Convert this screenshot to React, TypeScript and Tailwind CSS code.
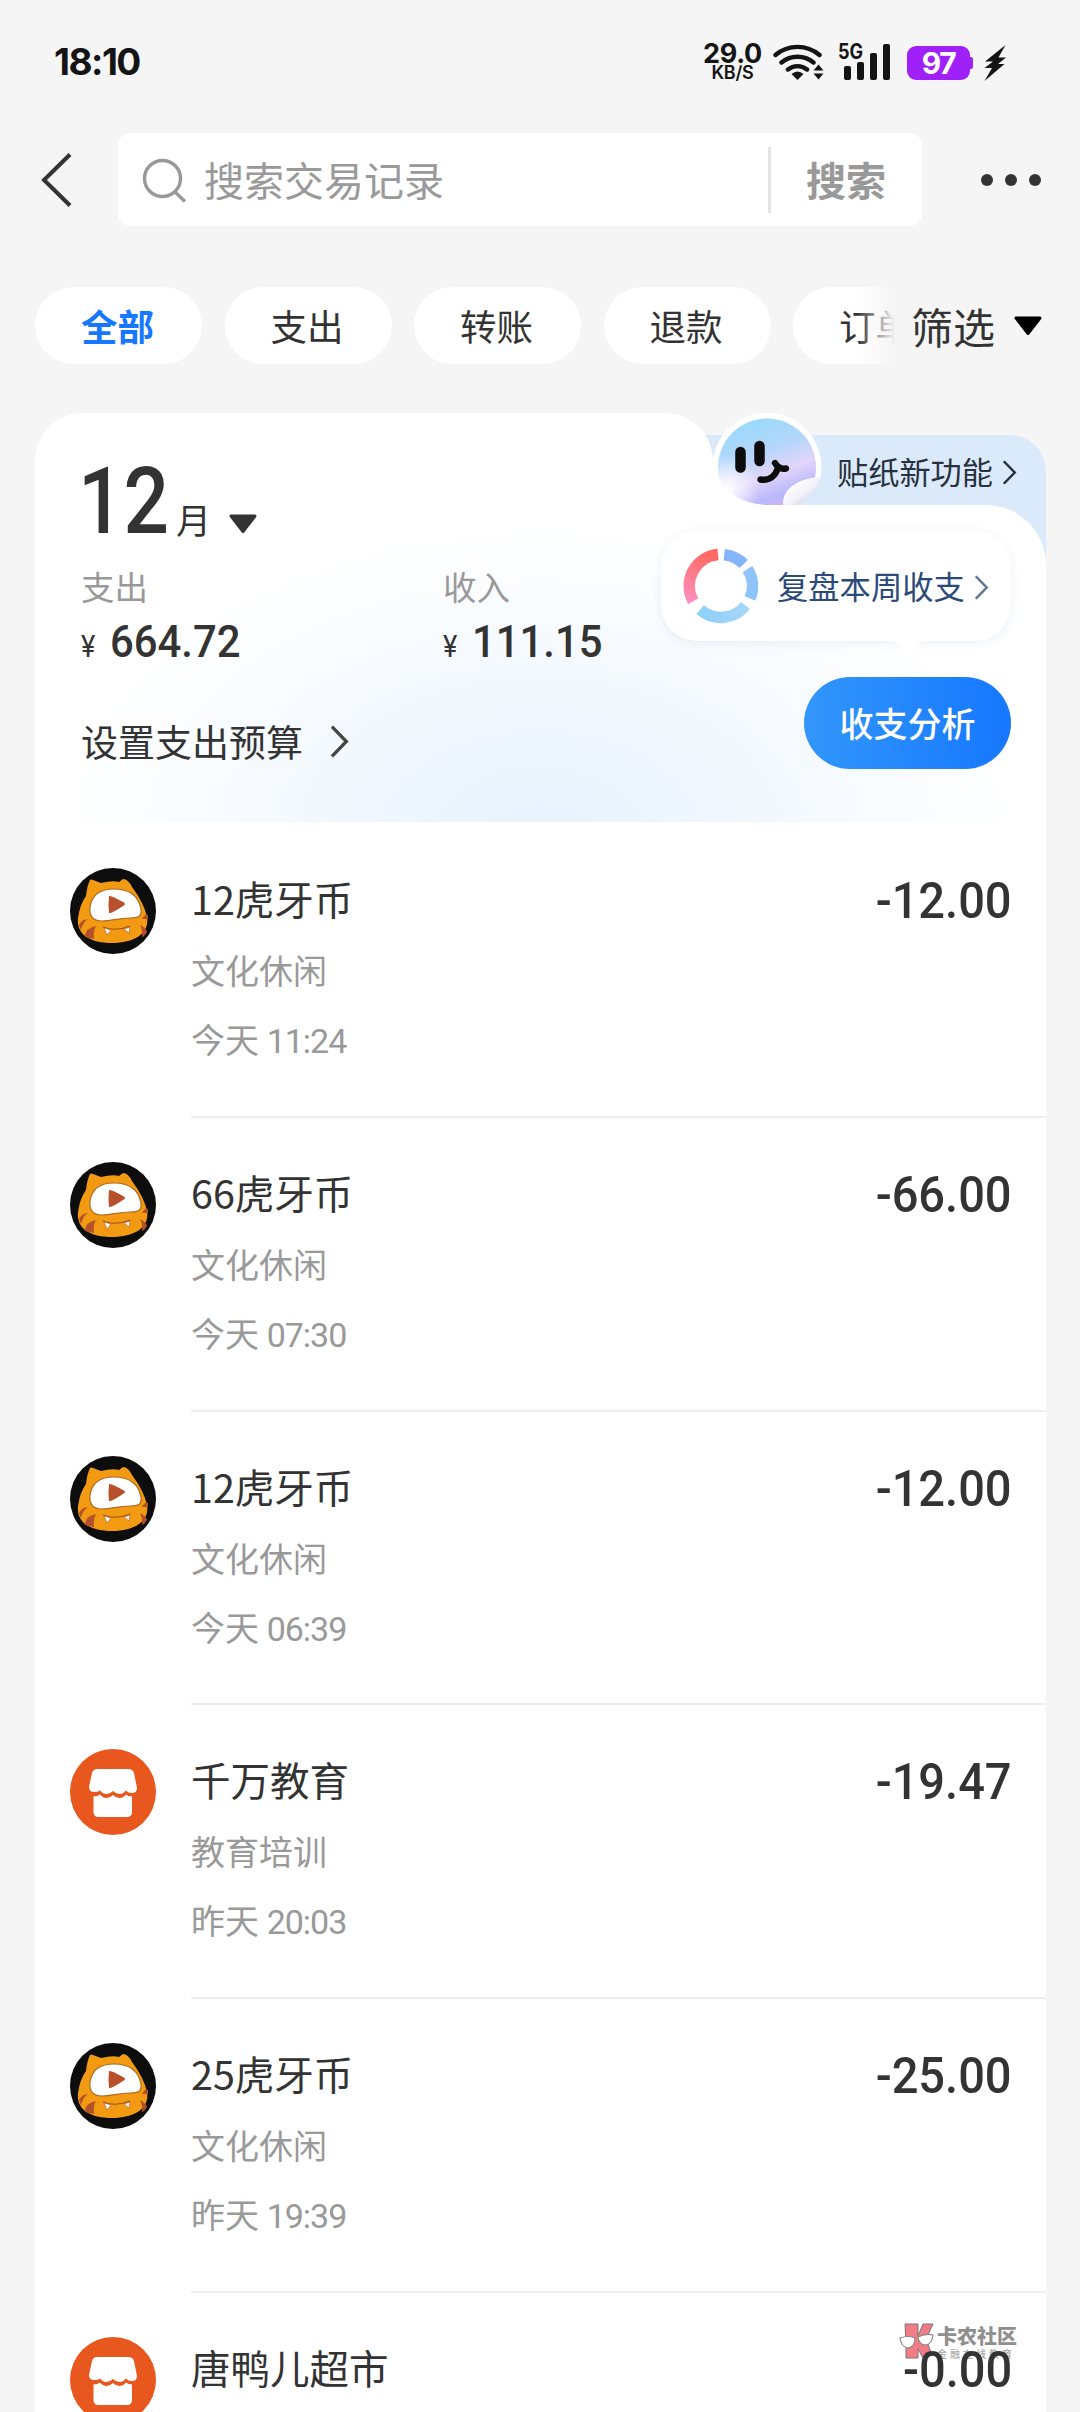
import React from "react";

type MerchantType = "huya" | "shop";

interface Bill {
  title: string;
  category?: string;
  day?: string;
  time?: string;
  amount: string;
  merchant: MerchantType;
}

const tabs = ["全部", "支出", "转账", "退款", "订单"];

const bills: Bill[] = [
  { title: "12虎牙币", category: "文化休闲", day: "今天", time: "11:24", amount: "-12.00", merchant: "huya" },
  { title: "66虎牙币", category: "文化休闲", day: "今天", time: "07:30", amount: "-66.00", merchant: "huya" },
  { title: "12虎牙币", category: "文化休闲", day: "今天", time: "06:39", amount: "-12.00", merchant: "huya" },
  { title: "千万教育", category: "教育培训", day: "昨天", time: "20:03", amount: "-19.47", merchant: "shop" },
  { title: "25虎牙币", category: "文化休闲", day: "昨天", time: "19:39", amount: "-25.00", merchant: "huya" },
  { title: "唐鸭儿超市", amount: "-0.00", merchant: "shop" },
];

const StatusBar = () => (
  <div className="flex h-[124px] shrink-0 items-start pl-[54px] font-['Inter',sans-serif] text-[#141414]">
    <span className="mt-[39px] text-[37px] leading-[45px] font-bold tracking-[-1.5px]">18:10</span>
    <div className="ml-auto flex items-start pr-[73px]">
      <div className="mt-[41px] flex w-[59px] flex-col items-center font-bold">
        <span className="text-[27px] leading-[25px] tracking-[-0.3px]">29.0</span>
        <span className="text-[18px] leading-[14px] font-semibold tracking-[-0.2px]">KB/S</span>
      </div>
      <svg className="mt-[42px] ml-[11px]" width="52" height="40" viewBox="0 0 52 40" fill="none">
        <path d="M2.5 13a34 34 0 0 1 44 0M8.500 20.500a25 25 0 0 1 32 0M15 27.500a15 15 0 0 1 19 0" stroke="#141414" strokeWidth="4.400" strokeLinecap="round" />
        <path d="M24.500 38 18.500 32q6-5 12 0z" fill="#141414" />
        <path d="M45.500 22.500l5 6h-10zM45.500 37.500l5-6h-10z" fill="#141414" />
      </svg>
      <div className="relative mt-[44px] ml-[19px] flex h-[36px] w-[46px] items-end gap-[6px]">
        <span className="absolute -top-[3px] -left-[6px] origin-left scale-x-[0.86] text-[21px] leading-[22px] font-bold">5G</span>
        <i className="h-[14px] w-[7px] rounded-[2px] bg-[#141414]" />
        <i className="h-[18px] w-[7px] rounded-[2px] bg-[#141414]" />
        <i className="h-[27px] w-[7px] rounded-[2px] bg-[#141414]" />
        <i className="h-[36px] w-[7px] rounded-[2px] bg-[#141414]" />
      </div>
      <div className="mt-[46px] ml-[17px] flex items-center">
        <span className="flex h-[34px] w-[63px] items-center justify-center rounded-[9px] bg-[#a020fa] text-[30px] leading-[34px] font-bold tracking-[-1.4px] text-white">
          97
        </span>
        <i className="h-[12px] w-[3px] rounded-r-[2px] bg-[#a020fa]" />
      </div>
      <svg className="mt-[44px] ml-[10px]" width="24" height="38" viewBox="0 0 24 38">
        <path d="M22.500 1 2 17.500h8L1.500 24h7.500L1.500 37 21.500 20H15l8-6.500h-7.500z" fill="#141414" />
      </svg>
    </div>
  </div>
);

const SearchHeader = () => (
  <div className="mt-[9px] flex h-[93px] shrink-0 items-center">
    <svg className="ml-[39px]" width="36" height="56" viewBox="0 0 36 56" fill="none">
      <path d="M31 2.500 5 28l26 25.500" stroke="#333" strokeWidth="4" />
    </svg>
    <div className="ml-[43px] flex h-[93px] w-[804px] items-center rounded-[13px] bg-white text-[#999]">
      <svg className="mt-[2px] ml-[24px]" width="46" height="46" viewBox="0 0 46 46" fill="none" stroke="#999" strokeWidth="3.400">
        <circle cx="20.500" cy="20.500" r="18" />
        <path d="M32 33l11 10.500" />
      </svg>
      <span className="-mt-[2px] ml-[16px] text-[40px] leading-[60px]">搜索交易记录</span>
      <i className="ml-auto h-[66px] w-[3px] bg-[#e3e3e3]" />
      <span className="-mt-[1px] mr-[36px] ml-[35px] text-[40px] leading-[60px] font-bold">搜索</span>
    </div>
    <div className="ml-[59px] flex gap-[12px]">
      <i className="size-[12px] rounded-full bg-[#333]" />
      <i className="size-[12px] rounded-full bg-[#333]" />
      <i className="size-[12px] rounded-full bg-[#333]" />
    </div>
  </div>
);

const Triangle = ({ color }: { color: string }) => (
  <svg width="30" height="20" viewBox="0 0 30 20">
    <path d="M3 2h24L15 17.500z" fill={color} stroke={color} strokeWidth="3" strokeLinejoin="round" />
  </svg>
);

const FilterTabs = () => (
  <div className="mt-[61px] flex h-[77px] shrink-0 items-center pl-[35px]">
    <div className="relative flex w-[860px] gap-[22.5px] overflow-hidden">
      {tabs.map((tab, i) => (
        <span
          key={tab}
          className={
            i === 0
              ? "flex h-[77px] w-[167px] shrink-0 items-center justify-center rounded-full bg-white pr-[2px] text-[36.5px] leading-[54px] font-bold text-[#1677ff]"
              : "flex h-[77px] w-[167px] shrink-0 items-center justify-center rounded-full bg-white pr-[2px] text-[36.5px] leading-[54px] text-[#333]"
          }
        >
          {tab}
        </span>
      ))}
      <i className="absolute top-0 right-0 h-full w-[38px] bg-linear-to-r from-[#f5f5f5]/0 to-[#f5f5f5]" />
    </div>
    <span className="mr-[18px] ml-[16px] text-[42px] leading-[62px] text-[#333]">筛选</span>
    <Triangle color="#000" />
  </div>
);

const Sticker = () => (
  <svg className="absolute top-0 left-[677px]" width="115" height="92" viewBox="0 0 115 92">
    <defs>
      <linearGradient id="face" x1="0.3" y1="0" x2="0.65" y2="1">
        <stop offset="0" stopColor="#97dafb" />
        <stop offset="0.35" stopColor="#b5d6fa" />
        <stop offset="0.58" stopColor="#e2d5fa" />
        <stop offset="0.8" stopColor="#b9b8fb" />
        <stop offset="1" stopColor="#d9b3f5" />
      </linearGradient>
      <radialGradient id="glow" cx="0.08" cy="0.72" r="0.35">
        <stop offset="0" stopColor="#fff" />
        <stop offset="1" stopColor="#fff" stopOpacity="0" />
      </radialGradient>
      <linearGradient id="curl" x1="0.2" y1="0.2" x2="0.8" y2="0.8">
        <stop offset="0" stopColor="#fff" />
        <stop offset="0.6" stopColor="#f3f1fa" />
        <stop offset="1" stopColor="#d3d3e4" />
      </linearGradient>
    </defs>
    <circle cx="55" cy="54" r="54.500" fill="#fff" />
    <circle cx="55" cy="54.500" r="49" fill="url(#face)" />
    <circle cx="55" cy="54.500" r="49" fill="url(#glow)" />
    <path d="M71 92c-1-15 14-27 38-28l6 28z" fill="#dbeafa" />
    <path d="M71 92c-1-15 14-27 38-28-4 8-10 19-21 28z" fill="url(#curl)" />
    <path d="M28.500 39v15.500M47.500 33v15" stroke="#0c0c0c" strokeWidth="10.500" strokeLinecap="round" />
    <path d="M48.500 66.500c9 1.500 16-4 17.500-13M63 50q4 7 11 5.500" stroke="#0c0c0c" strokeWidth="6.400" strokeLinecap="round" fill="none" />
    <path d="M0 40C1 64 16 92 58 92H0z" fill="#fff" />
  </svg>
);

const Donut = () => (
  <svg width="76" height="76" viewBox="0 0 76 76" fill="none" strokeWidth="11.500">
    <defs>
      <linearGradient id="red" x1="0.6" y1="0" x2="0.3" y2="1">
        <stop offset="0" stopColor="#ff6a63" />
        <stop offset="1" stopColor="#ff8cb8" />
      </linearGradient>
      <linearGradient id="sky" x1="0" y1="0" x2="1" y2="0">
        <stop offset="0" stopColor="#8ed0fa" />
        <stop offset="1" stopColor="#a5d5fb" />
      </linearGradient>
    </defs>
    <path d="M35 6.600A31.500 31.500 0 0 0 10.200 53.300" stroke="url(#red)" />
    <path d="M41.300 6.700A31.500 31.500 0 0 1 60.700 16" stroke="#84b5fb" />
    <path d="M64.500 21A31.500 31.500 0 0 1 67 50.500" stroke="#8fc4fb" />
    <path d="M62.500 57.500A31.500 31.500 0 0 1 17.200 61.700" stroke="url(#sky)" />
  </svg>
);

const Chevron = ({ className, color }: { className: string; color: string }) => (
  <svg className={className} viewBox="0 0 14 24" fill="none">
    <path d="M1.500 1.200 12 12 1.500 22.800" stroke={color} strokeWidth="2.400" />
  </svg>
);

const Summary = () => (
  <div className="relative h-[411px]">
    {/* blue promo tab, then the stepped white card in front of it */}
    <div className="absolute top-[22px] right-0 h-[130px] w-[400px] rounded-tr-[36px] bg-[#dbeafa]" />
    <div className="absolute top-0 left-0 h-[140px] w-[678px] rounded-t-[48px] bg-white" />
    <Sticker />
    <div className="absolute inset-x-0 top-[92px] bottom-0 rounded-tr-[60px] bg-white" />
    <div className="absolute inset-x-0 top-[92px] bottom-[2px] rounded-tr-[60px] bg-[radial-gradient(ellipse_480px_310px_at_505px_330px,#e7f2fe_0%,#f2f8fe_45%,rgba(255,255,255,0)_100%)]" />

    <div className="relative flex h-full justify-between">
      <div className="flex flex-col pl-[46px] text-[#333]">
        <div className="flex h-[131px] items-end">
          <span className="-ml-[3px] w-[96px] origin-left scale-x-[0.87] font-['Roboto',sans-serif] text-[92px] leading-[85px] font-medium">
            12
          </span>
          <span className="mb-[3px] ml-[2px] text-[35px] leading-[44px]">月</span>
          <span className="mb-[10px] ml-[17px]">
            <Triangle color="#333" />
          </span>
        </div>
        <div className="mt-[18px] flex">
          {[
            { label: "支出", value: "664.72" },
            { label: "收入", value: "111.15" },
          ].map((item) => (
            <div key={item.label} className="flex w-[362px] flex-col">
              <span className="text-[33.500px] leading-[48px] text-[#999]">{item.label}</span>
              <div className="mt-[5px] flex items-baseline font-['Roboto',sans-serif]">
                <span className="w-[29px] origin-left scale-x-[0.85] text-[32px]">¥</span>
                <span className="origin-left scale-x-[0.93] text-[45px] leading-[53px] font-medium">{item.value}</span>
              </div>
            </div>
          ))}
        </div>
        <div className="mt-[44px] flex items-center">
          <span className="text-[37px] leading-[54px]">设置支出预算</span>
          <Chevron className="ml-[26px] h-[33px] w-[21px]" color="#444" />
        </div>
      </div>

      <div className="absolute top-0 right-0 flex flex-col items-end pr-[35px]">
        <div className="mt-[35px] flex h-[46px] items-center text-[31.2px] leading-[46px] text-[#28313d]">
          贴纸新功能
          <Chevron className="mt-[2px] -mr-[6px] ml-[9px] h-[25px] w-[15px]" color="#28313d" />
        </div>
        <div className="relative mt-[36px] flex h-[111px] w-[350px] items-center rounded-[36px] bg-white shadow-[0_2px_10px_rgba(60,100,160,0.1)]">
          <div className="ml-[22px]">
            <Donut />
          </div>
          <span className="ml-[18px] text-[31.3px] leading-[46px] text-[#2b4a7a]">复盘本周收支</span>
          <Chevron className="mt-[3px] ml-[9px] h-[25px] w-[15px]" color="#5c7599" />
          <svg className="absolute top-[110px] left-[226px]" width="42" height="14" viewBox="0 0 42 14">
            <path d="M0 0q8 0 13 7 8 10 16 0 5-7 13-7z" fill="#fff" />
          </svg>
        </div>
        <button className="mt-[36px] flex h-[92px] w-[207px] items-center justify-center rounded-full bg-linear-to-r from-[#3296fb] to-[#1677ff] text-[34px] leading-[50px] font-medium text-white">
          收支分析
        </button>
      </div>
    </div>
  </div>
);

const MerchantIcon = ({ type }: { type: MerchantType }) => {
  if (type === "shop") {
    return (
      <svg className="size-[86px]" viewBox="0 0 86 86">
        <circle cx="43" cy="43" r="43" fill="#e8571e" />
        <path d="M28 20h30q5 0 6 4l3 15q0 5-5 5-4 0-6-2.500-3 3.500-6.500 3.500T43 42q-3 3-6.500 3T30 41.500Q28 43 24 43q-5 0-5-5l3-14q1-4 6-4z" fill="#fff" />
        <path d="M23.500 47.500q4 0 6.500-2 3 3.500 6.500 3.500t6.500-3q3 3 6.500 3t6.500-3.500q2 2 6 2V63q0 5-5 5h-28.500q-5 0-5-5z" fill="#fff" />
      </svg>
    );
  }
  return (
    <svg className="size-[86px]" viewBox="0 0 86 86">
      <circle cx="43" cy="43" r="43" fill="#0d0d0d" />
      <path d="M20 12q1-1 3 0l8 3q12-3 18-1l4-3q5 0 9 8 12 16 15 30c3 17-14 26-35 26S6 67 8 50q2-14 8-22 1-10 4-16z" fill="#f29b12" />
      <path d="M9 57q3-6 9-6-5 3-7 11zM15 69q0-9 11-11-3 5-2 13zM72 51q3-6 6-4v4zM70 57q6 3 7 7l-3 4-2 1q1-6-2-12z" fill="#b5512a" />
      <path d="M20 39c2-13 12-18 24-18s24 4 27 20c1 8-3 9-11 9-12 0-18 3-28 3-9 0-13-5-12-14z" fill="#fff" stroke="#b06a22" strokeWidth="1.200" />
      <path d="M39 28q2-1 14 6 4 2 0 4-12 8-14 7-1-8 0-17z" fill="#b8502c" />
      <path d="M33 59q13 5 27-1" stroke="#a5501c" strokeWidth="1.200" fill="none" />
      <path d="M34 60l7 2-4 5zM54 61l6-2-1 6z" fill="#fff" stroke="#b5512a" strokeWidth="0.600" />
    </svg>
  );
};

const BillRow = ({ bill }: { bill: Bill }) => (
  <div className="flex h-[293.75px] shrink-0 pl-[35px]">
    <div className="pt-[44px]">
      <MerchantIcon type={bill.merchant} />
    </div>
    <div className="ml-[35px] flex flex-1 justify-between border-b-2 border-[#eeeeee] pt-[46px] pr-[34px]">
      <div className="flex flex-col">
        <span className="text-[39.5px] leading-[56px] text-[#333]">{bill.title}</span>
        {bill.category && <span className="mt-[22px] text-[34px] leading-[44px] text-[#999]">{bill.category}</span>}
        {bill.time && (
          <span className="mt-[25px] text-[34px] leading-[44px] text-[#999]">
            {bill.day} <span className="font-['Roboto',sans-serif] tracking-[-1px]">{bill.time}</span>
          </span>
        )}
      </div>
      <span className="relative z-10 mt-[1px] origin-right scale-x-[0.94] font-['Roboto',sans-serif] text-[50px] leading-[60px] font-medium text-[#333]">
        {bill.amount}
      </span>
    </div>
  </div>
);

const Watermark = () => (
  <div className="absolute top-[2322px] left-[899px] flex text-[#8f8f8f]">
    <svg width="36" height="38" viewBox="0 0 36 38">
      <path d="M6 2h13v12l5-12h10l-7 15 6 16-9 3-5-9v9H7V22z" fill="#f27c86" stroke="#777" strokeWidth="1" />
      <path d="M1 16q8-3 15 0 0 9-7 10-7-1-8-10zM19 15q7-4 15-2-1 9-7 10-7 0-8-8z" fill="#fff" stroke="#888" strokeWidth="1.200" />
    </svg>
    <div className="ml-[2px] flex flex-col">
      <span className="mt-[2px] text-[20px] leading-[24px] font-black">卡农社区</span>
      <span className="text-[10px] leading-[12px] font-medium tracking-[3px] whitespace-nowrap text-[#aaa]">金融在线教育</span>
    </div>
  </div>
);

export default function App() {
  return (
    <div className="relative flex h-[2412px] w-[1080px] flex-col overflow-hidden bg-[#f5f5f5] font-['Noto_Sans_CJK_SC',sans-serif]">
      <StatusBar />
      <SearchHeader />
      <FilterTabs />
      <div className="mx-[35px] mt-[49px] w-[1011px]">
        <Summary />
        <div className="bg-white">
          {bills.map((bill, i) => (
            <BillRow key={i} bill={bill} />
          ))}
        </div>
      </div>
      <Watermark />
    </div>
  );
}
